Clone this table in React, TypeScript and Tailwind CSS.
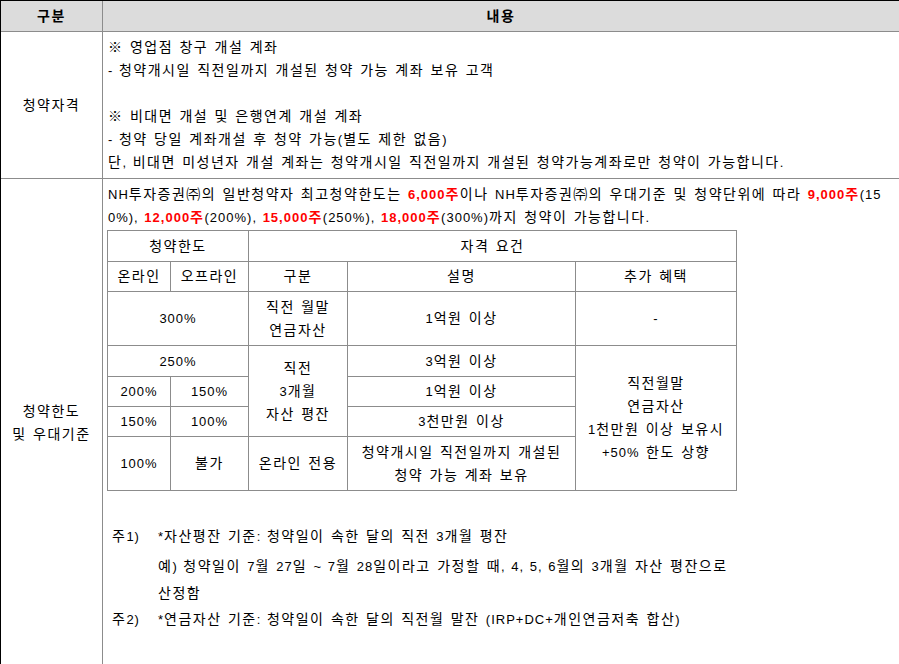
import * as React from "react";

const font = "font-['Liberation_Sans','Noto_Sans_CJK_KR',sans-serif] text-[14px] tracking-[1.5px] [word-spacing:1px]";

// latin / digit runs: narrower, like the bitmap font in the screenshot
const L = ({ children }: { children: React.ReactNode }) => (
  <span className="text-[13px] tracking-[1px] [word-spacing:1px]">{children}</span>
);

const Red = ({ children }: { children: React.ReactNode }) => (
  <span className="font-bold text-[#ff0000]">{children}</span>
);

const Td = ({
  children,
  colSpan,
  rowSpan,
}: {
  children: React.ReactNode;
  colSpan?: number;
  rowSpan?: number;
}) => (
  <td
    colSpan={colSpan}
    rowSpan={rowSpan}
    className="border border-[#8c8c8c] p-0 text-center align-middle leading-[23px]"
  >
    {children}
  </td>
);

const LimitTable = () => (
  <table className="mt-[1px] w-[629px] table-fixed border-collapse border border-black">
    <colgroup>
      <col className="w-[63px]" />
      <col className="w-[78px]" />
      <col className="w-[99px]" />
      <col className="w-[228px]" />
      <col className="w-[161px]" />
    </colgroup>
    <tbody>
      <tr className="h-[31px]">
        <Td colSpan={2}>청약한도</Td>
        <Td colSpan={3}>자격 요건</Td>
      </tr>
      <tr className="h-[30px]">
        <Td>온라인</Td>
        <Td>오프라인</Td>
        <Td>구분</Td>
        <Td>설명</Td>
        <Td>추가 혜택</Td>
      </tr>
      <tr className="h-[54px]">
        <Td colSpan={2}>
          <L>300%</L>
        </Td>
        <Td>
          직전 월말
          <br />
          연금자산
        </Td>
        <Td>
          <L>1</L>억원 이상
        </Td>
        <Td>
          <L>-</L>
        </Td>
      </tr>
      <tr className="h-[31px]">
        <Td colSpan={2}>
          <L>250%</L>
        </Td>
        <Td rowSpan={3}>
          직전
          <br />
          <L>3</L>개월
          <br />
          자산 평잔
        </Td>
        <Td>
          <L>3</L>억원 이상
        </Td>
        <Td rowSpan={4}>
          직전월말
          <br />
          연금자산
          <br />
          <L>1</L>천만원 이상 보유시
          <br />
          <L>+50%</L> 한도 상향
        </Td>
      </tr>
      <tr className="h-[30px]">
        <Td>
          <L>200%</L>
        </Td>
        <Td>
          <L>150%</L>
        </Td>
        <Td>
          <L>1</L>억원 이상
        </Td>
      </tr>
      <tr className="h-[30px]">
        <Td>
          <L>150%</L>
        </Td>
        <Td>
          <L>100%</L>
        </Td>
        <Td>
          <L>3</L>천만원 이상
        </Td>
      </tr>
      <tr className="h-[54px]">
        <Td>
          <L>100%</L>
        </Td>
        <Td>불가</Td>
        <Td>온라인 전용</Td>
        <Td>
          청약개시일 직전일까지 개설된
          <br />
          청약 가능 계좌 보유
        </Td>
      </tr>
    </tbody>
  </table>
);

export default function App() {
  return (
    <div className={`h-[664px] w-[899px] overflow-hidden bg-white text-black ${font}`}>
      <div className="border-l border-t border-black">
        {/* header */}
        <div className="flex h-[31px] border-b border-[#8c8c8c] bg-[#dcdcdc] font-bold">
          <div className="flex w-[102px] shrink-0 items-center justify-center border-r border-[#8c8c8c]">구분</div>
          <div className="flex flex-1 items-center justify-center">내용</div>
        </div>

        {/* 청약자격 */}
        <div className="flex h-[147px] border-b border-[#8c8c8c]">
          <div className="flex w-[102px] shrink-0 items-center justify-center border-r border-[#8c8c8c]">청약자격</div>
          <div className="flex-1 whitespace-nowrap pl-[5px] pt-[4px] leading-[23px]">
            <div>※ 영업점 창구 개설 계좌</div>
            <div>
              <L>- </L>청약개시일 직전일까지 개설된 청약 가능 계좌 보유 고객
            </div>
            <div className="h-[23px]" />
            <div>※ 비대면 개설 및 은행연계 개설 계좌</div>
            <div>
              <L>- </L>청약 당일 계좌개설 후 청약 가능<L>(</L>별도 제한 없음<L>)</L>
            </div>
            <div>
              단<L>, </L>비대면 미성년자 개설 계좌는 청약개시일 직전일까지 개설된 청약가능계좌로만 청약이 가능합니다
              <L>.</L>
            </div>
          </div>
        </div>

        {/* 청약한도 및 우대기준 */}
        <div className="flex h-[488px]">
          <div className="flex w-[102px] shrink-0 items-center justify-center border-r border-[#8c8c8c] text-center leading-[23px]">
            청약한도
            <br />
            및 우대기준
          </div>
          <div className="flex-1 whitespace-nowrap pl-[4px] pt-[4px] leading-[23px]">
            <div className="pl-[1px]">
              <L>NH</L>투자증권㈜의 일반청약자 최고청약한도는{" "}
              <Red>
                <L>6,000</L>주
              </Red>
              이나 <L>NH</L>투자증권㈜의 우대기준 및 청약단위에 따라{" "}
              <Red>
                <L>9,000</L>주
              </Red>
              <L>(15</L>
              <br />
              <L>0%), </L>
              <Red>
                <L>12,000</L>주
              </Red>
              <L>(200%), </L>
              <Red>
                <L>15,000</L>주
              </Red>
              <L>(250%), </L>
              <Red>
                <L>18,000</L>주
              </Red>
              <L>(300%)</L>까지 청약이 가능합니다<L>.</L>
            </div>
            <LimitTable />
            <div className="ml-[5px] mt-[32px] leading-[26px]">
              <div className="flex">
                <span className="w-[46px] shrink-0">
                  주<L>1)</L>
                </span>
                <span>
                  <L>*</L>자산평잔 기준<L>: </L>청약일이 속한 달의 직전 <L>3</L>개월 평잔
                </span>
              </div>
              <div className="mt-[3px] pl-[46px]">
                예<L>) </L>청약일이 <L>7</L>월 <L>27</L>일 <L>~ 7</L>월 <L>28</L>일이라고 가정할 때<L>, 4, 5, 6</L>월의{" "}
                <L>3</L>개월 자산 평잔으로
                <br />
                산정함
              </div>
              <div className="flex">
                <span className="w-[46px] shrink-0">
                  주<L>2)</L>
                </span>
                <span>
                  <L>*</L>연금자산 기준<L>: </L>청약일이 속한 달의 직전월 말잔 <L>(IRP+DC+</L>개인연금저축 합산<L>)</L>
                </span>
              </div>
            </div>
          </div>
        </div>
      </div>
    </div>
  );
}
